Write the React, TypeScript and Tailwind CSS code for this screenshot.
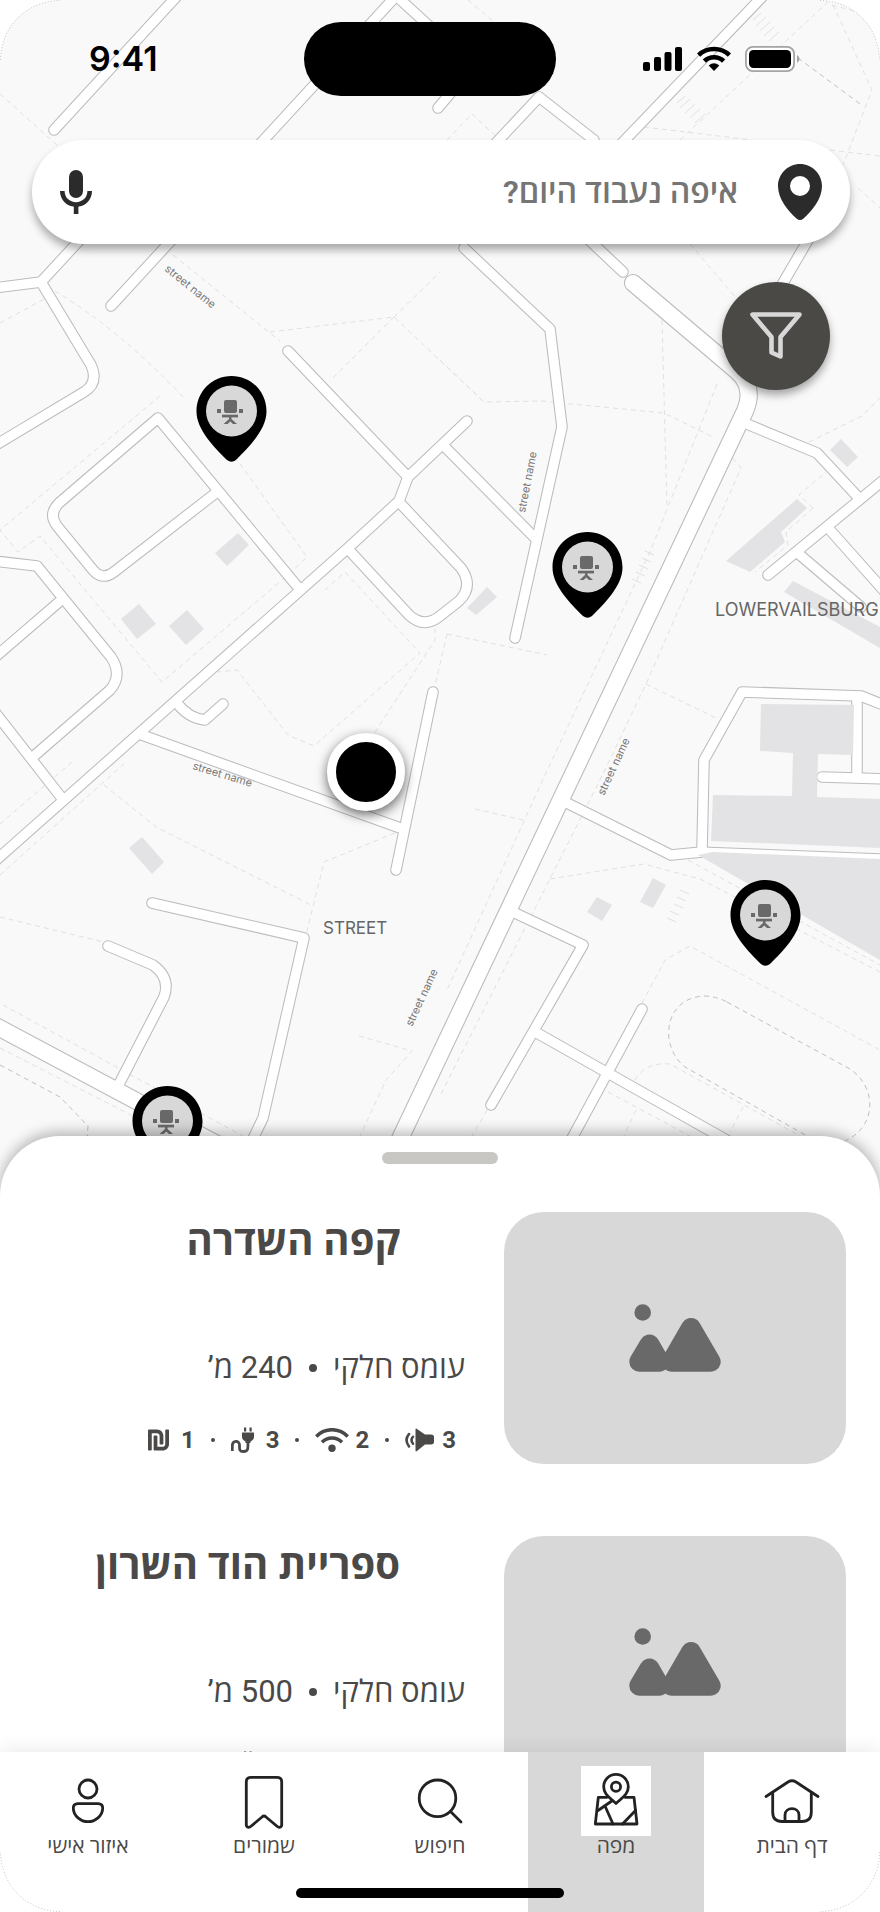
import type { ReactNode } from "react";
import { FaShekelSign } from "react-icons/fa";

const HEBREW = "font-[Roboto,'Open_Sans','Noto_Sans',sans-serif]";

const narrowRoads = [
  "M178,-5 L54,130",
  "M396,-4 L111,306",
  "M392,-8 L440,36",
  "M438,108 L470,70",
  "M480,160 L539,97 L594,140",
  "M764,-5 L600,166",
  "M570,222 L623,272",
  "M815,228 L783,283 L752,335 L750,380",
  "M464,248 L550,329 L562,427 L515,638",
  "M467,421 L408,477 L399,501 L348,548 L-6,862",
  "M288,351 L408,477",
  "M444,446 L535,538",
  "M399,502 L461,568 Q474,586 459,601 L440,616 Q424,629 409,615 L348,549",
  "M297,586 L158,418 L59,503 Q48,514 57,526 L93,570 Q102,581 114,572 L217,492",
  "M-6,561 L37,566 L111,657 Q123,675 110,690 L34,756",
  "M59,602 L-6,658",
  "M-6,711 L61,797",
  "M177,703 Q188,718 205,720 L223,704",
  "M142,735 L403,829",
  "M433,692 L396,870",
  "M89,230 L41,282 L-6,288",
  "M41,282 L91,365 Q99,383 84,392 L-6,446",
  "M152,903 L304,938 L263,1118 L250,1145",
  "M108,946 L153,965 Q171,978 164,997 L118,1086",
  "M742,422 L817,453 L857,496",
  "M768,575 L886,478",
  "M830,530 L886,593",
  "M800,555 L861,607",
  "M567,803 L671,855 L702,852",
  "M702,851 L704,760 L742,692 L861,696 L886,706",
  "M857,698 L857,777",
  "M822,777 L886,779",
  "M515,913 L583,945 L491,1105",
  "M537,1033 L730,1142",
  "M642,1009 L570,1142",
];

const wideRoads = [
  "M633,283 L738,372 Q755,388 745,411 L390,1160",
  "M-8,1024 L230,1151",
];

const buildings = [
  "215,553 238,533 249,545 227,566",
  "121,619 139,604 156,624 137,639",
  "169,626 187,610 204,629 186,645",
  "467,608 487,587 497,597 476,615",
  "830,450 841,439 858,457 847,467",
  "726,561 797,499 807,508 781,532 785,542 750,572",
  "793,581 880,627 880,648 784,592",
  "129,848 142,837 164,862 152,874",
  "587,912 597,897 612,905 602,921",
  "640,902 653,878 666,885 653,908",
];

const campus = [
  "761,704 854,705 853,755 818,754 817,797 880,799 880,848 711,841 713,795 792,796 793,753 760,751",
  "698,855 713,852 880,859 880,960",
];

const paths = [
  "M0,94 L58,146",
  "M0,323 L46,298",
  "M55,291 Q120,330 186,400",
  "M173,255 L280,341",
  "M270,332 L394,317 L484,402 L541,401 L664,413 L715,438",
  "M394,317 L330,381",
  "M394,317 L440,272",
  "M160,396 L0,530 L18,552 L40,536 L162,682 L288,575 L307,557 L238,461",
  "M325,590 L345,572 L420,653 L314,746 L288,735 L237,670 L217,672",
  "M370,740 L435,640 L435,620",
  "M0,875 L126,762",
  "M0,824 L72,762",
  "M104,785 L156,827 L313,906",
  "M395,833 L324,862 L306,935",
  "M0,917 L108,943",
  "M3,1005 L250,1140",
  "M0,1048 L160,1130",
  "M447,634 L547,655",
  "M447,634 L434,690",
  "M717,384 L650,552 L545,775 L447,990",
  "M662,320 L667,508",
  "M733,458 L741,468 L646,684 L600,780 L440,1096",
  "M646,684 L718,719",
  "M809,442 L862,416 L880,398",
  "M813,508 L799,495 L826,472",
  "M813,508 L786,532 L788,545 L755,572",
  "M359,1036 L412,1051 L386,1080 L360,1136",
  "M475,809 L523,820",
  "M550,879 L644,864 L700,879 L880,972",
  "M688,860 L880,965",
  "M642,1003 L665,960 L690,946 L880,1050",
  "M635,1080 Q645,1062 670,1064 L800,1136",
  "M608,1092 L690,1136",
  "M743,1107 L730,1132",
  "M636,1110 L624,1136",
  "M487,1110 L472,1136",
  "M644,127 L752,140",
  "M830,150 L880,156",
  "M680,140 L830,0",
  "M833,5 L872,90 L843,165",
  "M690,244 L736,298",
  "M447,140 L472,114 L500,140",
  "M468,0 L494,22",
  "M440,360 L484,402",
  "M832,5 L858,12",
  "M858,188 L880,208",
];

const crossings = [
  "M753,20 l8,-7 M756,26 l10,-9 M760,31 l10,-9 M764,36 l10,-9 M769,41 l10,-9",
  "M677,103 l8,-7 M680,108 l10,-9 M685,113 l10,-9 M690,118 l10,-9 M695,123 l10,-9",
  "M645,551 l9,4 M642,558 l9,4 M639,565 l9,4 M636,572 l9,4 M632,579 l9,4",
  "M680,890 l9,4 M677,897 l9,4 M674,904 l9,4 M670,911 l9,4 M667,918 l9,4",
];

const streetLabels = [
  { x: 164, y: 270, angle: 39 },
  { x: 525, y: 513, angle: -79 },
  { x: 192, y: 769, angle: 17 },
  { x: 604, y: 796, angle: -65 },
  { x: 412, y: 1027, angle: -65 },
];

function CityMap() {
  return (
    <svg
      className="absolute inset-0 h-full w-full"
      viewBox="0 0 880 1912"
      preserveAspectRatio="xMidYMin slice"
      aria-hidden="true"
    >
      <g fill="none" stroke="#e1e1e1" strokeWidth="1">
        {paths.map((d) => (
          <path key={d} d={d} strokeDasharray="5 4" />
        ))}
        {crossings.map((d) => (
          <path key={d} d={d} />
        ))}
      </g>
      <g fill="none" stroke="#c0c0c0" strokeWidth="1" strokeDasharray="5 4">
        <path d="M727,1002 L850,1069 C878,1088 877,1128 843,1142 L807,1136 L685,1067 C658,1046 664,996 706,996 Q718,997 727,1002Z" />
        <path d="M0,1065 L60,1097 L88,1126 L87,1140" />
        <path d="M798,58 L863,106" />
      </g>
      <g fill="#e3e2e4">
        {buildings.map((points) => (
          <polygon key={points} points={points} />
        ))}
      </g>
      <g fill="none" stroke="#bcbcbc" strokeLinecap="round" strokeLinejoin="round">
        {narrowRoads.map((d) => (
          <path key={d} d={d} strokeWidth="11.6" />
        ))}
        {wideRoads.map((d) => (
          <path key={d} d={d} strokeWidth="18.2" />
        ))}
        <path d="M702,851 L886,858" strokeWidth="9" />
      </g>
      <g fill="none" stroke="#ffffff" strokeLinecap="round" strokeLinejoin="round">
        {narrowRoads.map((d) => (
          <path key={d} d={d} strokeWidth="9.5" />
        ))}
        {wideRoads.map((d) => (
          <path key={d} d={d} strokeWidth="16" />
        ))}
        <path d="M702,851 L886,858" strokeWidth="7" />
      </g>
      <g fill="#e3e2e4">
        {campus.map((points) => (
          <polygon key={points} points={points} />
        ))}
      </g>
      <g className="font-[Inter,sans-serif] text-[11px]" fill="#7a7a7a">
        {streetLabels.map(({ x, y, angle }) => (
          <text key={`${x}-${y}`} x={x} y={y} transform={`rotate(${angle} ${x} ${y})`}>
            street name
          </text>
        ))}
      </g>
      <g className="font-[Inter,sans-serif]" fill="#666666">
        <text className="text-[17px]" x="323" y="934">STREET</text>
        <text className="text-[18px]" x="715" y="616">LOWERVAILSBURG</text>
      </g>
    </svg>
  );
}

function PlacePin({ place }: { place: string }) {
  return (
    <button type="button" aria-label="מקום עבודה" className={`absolute ${place}`}>
      <svg className="block h-[86px] w-[71px]" viewBox="0 0 71 86">
        <path d="M35.5,0 C55,0 70.5,15.5 70.5,35.5 C70.5,54 52,72 40,84 Q35.5,87.5 31,84 C19,72 0.5,54 0.5,35.5 C0.5,15.5 16,0 35.5,0Z" fill="#000" />
        <circle cx="35.5" cy="35" r="25.5" fill="#d8d8d8" />
        <g fill="#696969">
          <rect x="28" y="24" width="13" height="13" rx="2" />
          <rect x="21" y="33" width="4" height="4" />
          <rect x="43" y="33" width="4" height="4" />
          <rect x="26" y="38.7" width="16" height="2.7" />
          <path d="M33,41 h2.5 v2 l5.5,5 h-4 l-2.7,-2.6 l-2.7,2.6 h-4 l5.4,-5z" />
        </g>
      </svg>
    </button>
  );
}

function StatusBar() {
  return (
    <header className="relative grid grid-cols-[1fr_252px_1fr] items-center pt-[22px] pr-5">
      <time className="pl-[89px] font-[Inter,sans-serif] text-[34px] leading-10 font-semibold text-black">9:41</time>
      <div className="h-[74px] rounded-full bg-black" />
      <div className="flex items-center justify-end gap-[14px] pr-[60px]">
        <svg className="h-[26px] w-10" viewBox="0 0 40 26" aria-hidden="true">
          <rect x="0" y="16" width="7" height="9" rx="2" />
          <rect x="11" y="11" width="7" height="14" rx="2" />
          <rect x="21.5" y="6" width="7" height="19" rx="2" />
          <rect x="32" y="1" width="7" height="24" rx="2" />
        </svg>
        <svg className="h-[26px] w-[34px]" viewBox="0 0 34 26" aria-hidden="true">
          <g fill="none" stroke="#000" strokeWidth="4.6">
            <path d="M1.6,9.2 C10,1 24,1 32.4,9.2" />
            <path d="M7.4,15.2 C12.5,10 21.5,10 26.6,15.2" />
          </g>
          <path d="M11.7,19.5 Q17,15 22.3,19.5 L17,25Z" />
        </svg>
        <svg className="h-[26px] w-[55px]" viewBox="0 0 55 26" aria-hidden="true">
          <rect x="0.9" y="0.9" width="48.2" height="24.2" rx="7" fill="#fff" stroke="#a4a4a4" strokeWidth="1.8" />
          <rect x="4" y="4" width="42" height="18" rx="4.5" />
          <path d="M52,9 Q54.5,10.5 54.5,13 T52,17Z" fill="#a4a4a4" />
        </svg>
      </div>
    </header>
  );
}

function SearchBar() {
  return (
    <form
      dir="rtl"
      className="relative mt-[44px] mr-[30px] ml-8 flex h-[104px] items-center rounded-full bg-white px-7 shadow-[0_6px_8px_rgba(0,0,0,0.32)]"
      onSubmit={(event) => event.preventDefault()}
    >
      <svg className="h-14 w-11 shrink-0" viewBox="0 0 44 56" aria-hidden="true">
        <path
          fill="#2b2b2b"
          fillRule="evenodd"
          d="M22,0 C34,0 44,10 44,22 C44,35 34,47 25.5,54.5 Q22,57.5 18.5,54.5 C10,47 0,35 0,22 C0,10 10,0 22,0Z M22,12 A10,10 0 1 0 22,32 A10,10 0 1 0 22,12Z"
        />
      </svg>
      <label htmlFor="place-search" className="sr-only">חיפוש מקום</label>
      <input
        id="place-search"
        type="text"
        placeholder="איפה נעבוד היום?"
        className={`h-full min-w-0 flex-1 bg-transparent px-10 text-[32px] leading-[56px] font-semibold outline-none placeholder:text-[#757575] ${HEBREW}`}
      />
      <button type="button" aria-label="חיפוש קולי" className="shrink-0">
        <svg className="block h-11 w-8" viewBox="0 0 32 44">
          <rect x="9" y="0" width="14" height="28" rx="7" fill="#2b2b2b" />
          <path d="M2.3,21 C2.3,29 8.5,34.5 16,34.5 C23.5,34.5 29.7,29 29.7,21" fill="none" stroke="#2b2b2b" strokeWidth="4.6" />
          <rect x="13.8" y="34" width="4.6" height="10" fill="#2b2b2b" />
        </svg>
      </button>
    </form>
  );
}

function Rating({ value, gap, children }: { value: number; gap: string; children: ReactNode }) {
  return (
    <li className={`flex items-center ${gap}`}>
      <span>{value}</span>
      {children}
    </li>
  );
}

function Separator() {
  return <li aria-hidden="true" className="size-1 rounded-full bg-[#4a4947]" />;
}

function PlaceCard({ name, distance }: { name: string; distance: string }) {
  return (
    <article dir="rtl" className={`flex text-[#4a4947] ${HEBREW}`}>
      <div className="flex h-[252px] w-[342px] shrink-0 items-center justify-center rounded-[40px] bg-[#d8d8d8]">
        <svg className="h-[68px] w-[92px]" viewBox="0 0 92 68" fill="#696969" stroke="#696969" aria-hidden="true">
          <circle cx="13.7" cy="8.5" r="8.3" stroke="none" />
          <path d="M20.5,40.5 L30.5,57.7 H10.3Z" strokeWidth="20" strokeLinejoin="round" />
          <path d="M62,24 L81.7,57.7 H42.5Z" strokeWidth="20" strokeLinejoin="round" />
        </svg>
      </div>
      <div className="min-w-0 flex-1 pt-1">
        <h2 className="pr-[104px] text-[40px] leading-[52px] font-bold">{name}</h2>
        <div className="mt-[80px] flex items-center gap-4 pr-[39px] text-[31px] leading-10">
          <span>עומס חלקי</span>
          <span className="size-2 rounded-full bg-[#4a4947]" />
          <span>{distance} מ’</span>
        </div>
        <ul className="mt-[36px] flex h-8 items-center gap-4 pr-[48px] text-2xl leading-8 font-bold">
          <Rating value={3} gap="gap-2">
            <svg className="h-6 w-[29px]" viewBox="0 0 29 26" preserveAspectRatio="none" aria-label="רעש">
              <path d="M10.5,1.5 Q10.5,0 12,1 L20,7 H26 Q29,7 29,10 V15 Q29,18 26,18 H20 L12,25 Q10.5,26 10.5,24.5Z" fill="#4a4947" />
              <g fill="none" stroke="#4a4947" strokeWidth="2.6" strokeLinecap="round">
                <path d="M8,9.5 Q5,13 8,17" />
                <path d="M4,6.5 Q-1,13 4,20" />
              </g>
            </svg>
          </Rating>
          <Separator />
          <Rating value={2} gap="gap-1.5">
            <svg className="h-6 w-[34px]" viewBox="0 0 34 24" aria-label="אינטרנט">
              <g fill="none" stroke="#4a4947" strokeWidth="3.6">
                <path d="M1.2,8.5 C10,-0.5 24,-0.5 32.8,8.5" />
                <path d="M7,14.2 C12.5,8.5 21.5,8.5 27,14.2" />
              </g>
              <circle cx="17" cy="20.3" r="3.7" fill="#4a4947" />
            </svg>
          </Rating>
          <Separator />
          <Rating value={3} gap="gap-3">
            <svg className="h-[26px] w-[23px]" viewBox="0 0 23 26" aria-label="שקעים">
              <path d="M13,0.5 h2.2 v4 h-2.2z M18.5,0.5 h2.2 v4 h-2.2z" fill="#4a4947" />
              <path d="M11,5.5 H23 V10 Q23,12.5 19.5,14.5 V16 H14.5 V14.5 Q11,12.5 11,10Z" fill="#4a4947" />
              <path d="M1.3,24 V19 C1.3,13 8.5,13 8.5,18 C8.5,22 8,24.5 12.5,24.5 C17,24.5 17,22 17,16" fill="none" stroke="#4a4947" strokeWidth="2.8" />
            </svg>
          </Rating>
          <Separator />
          <Rating value={1} gap="gap-3">
            <FaShekelSign className="h-6 w-[21px]" aria-label="מחיר" />
          </Rating>
        </ul>
      </div>
    </article>
  );
}

const tabs: { label: string; active?: boolean; icon: ReactNode }[] = [
  {
    label: "דף הבית",
    icon: (
      <>
        <path d="M9,30.5 L31,16 Q35,13.5 39,16 L61,30.5" />
        <path d="M15.7,27 V46 Q15.7,55.5 25,55.5 H45 Q54.3,55.5 54.3,46 V27" />
        <path d="M28,55 V49 C28,40.5 42,40.5 42,49 V55" />
      </>
    ),
  },
  {
    label: "מפה",
    active: true,
    icon: (
      <>
        <path d="M26,31.3 H17.3 L14.3,58 H56 L53,31.3 H44" />
        <path d="M35,37.5 C28,31 22.7,28 22.7,20.7 A12.3,12.3 0 0 1 47.3,20.7 C47.3,28 42,31 35,37.5Z" />
        <circle cx="35" cy="20.7" r="4.6" />
        <path d="M17,44.5 L31.5,34.5 M24,40 L32,58 M41.5,58 L54.5,44.5" />
      </>
    ),
  },
  {
    label: "חיפוש",
    icon: (
      <>
        <circle cx="32.5" cy="32.3" r="18.3" />
        <path d="M45.5,45.5 L56,56" />
      </>
    ),
  },
  {
    label: "שמורים",
    icon: (
      <path d="M22,11.3 H48 Q52.7,11.3 52.7,16 V58.5 C52.7,61.5 50,62 48,60.3 L37,51 Q35,49 33,51 L22,60.3 C20,62 17.3,61.5 17.3,58.5 V16 Q17.3,11.3 22,11.3Z" />
    ),
  },
  {
    label: "איזור אישי",
    icon: (
      <>
        <circle cx="35" cy="23" r="9" />
        <path d="M25,37.7 H45 Q49.7,38 49.7,42 C49.7,50 42,55.7 35,55.7 C28,55.7 20.3,50 20.3,42 Q20.3,38 25,37.7Z" />
      </>
    ),
  },
];

function TabBar() {
  return (
    <nav
      dir="rtl"
      className={`relative z-10 flex h-[160px] shrink-0 bg-white shadow-[0_-4px_16px_rgba(0,0,0,0.07)] ${HEBREW}`}
    >
      {tabs.map(({ label, active, icon }) => (
        <a
          key={label}
          href="#"
          aria-current={active ? "page" : undefined}
          className={`flex flex-1 flex-col items-center pt-[14px] text-[21px] leading-5 text-[#4a4947] ${active ? "bg-[#d8d8d8]" : ""}`}
        >
          <svg
            className={`size-[70px] ${active ? "bg-white" : ""}`}
            viewBox="0 0 70 70"
            fill="none"
            stroke="#222222"
            strokeWidth="2.8"
            strokeLinecap="round"
            strokeLinejoin="round"
            aria-hidden="true"
          >
            {icon}
          </svg>
          {label}
        </a>
      ))}
      <div className="pointer-events-none absolute inset-x-0 bottom-[14px] flex justify-center pr-5">
        <div className="h-2.5 w-[268px] rounded-full bg-black" />
      </div>
    </nav>
  );
}

function CornerEdge({ place }: { place: string }) {
  return (
    <svg className={`pointer-events-none absolute z-20 size-[60px] ${place}`} viewBox="0 0 60 60" aria-hidden="true">
      <path d="M0.5,60 A59.5,59.5 0 0 1 60,0.5" fill="none" stroke="#b8b8b8" strokeDasharray="1 2" />
    </svg>
  );
}

export default function App() {
  return (
    <main className="relative flex h-screen flex-col overflow-hidden rounded-[60px] bg-[#f9f9f9]">
      <CityMap />
      <section className="relative min-h-0 flex-1">
        <PlacePin place="left-[196px] top-[376px]" />
        <PlacePin place="left-[552px] top-[532px]" />
        <PlacePin place="left-[730px] top-[880px]" />
        <PlacePin place="left-[132px] top-[1086px]" />
        <div className="absolute top-[733px] left-[327px] size-[78px] rounded-full border-[9px] border-white bg-black shadow-[0_4px_12px_rgba(0,0,0,0.6)]" />
        <StatusBar />
        <SearchBar />
        <div className="mt-[38px] flex justify-end pr-[50px]">
          <button
            type="button"
            aria-label="סינון"
            className="relative flex size-[108px] items-center justify-center rounded-full bg-[#4a4946] shadow-[0_5px_8px_rgba(0,0,0,0.35)]"
          >
            <svg className="h-12 w-[52px]" viewBox="0 0 52 48" fill="none" stroke="#d8d8d8" strokeWidth="4.6" strokeLinejoin="round">
              <path d="M2.5,2.5 H49.5 L30.5,25 V44.5 L21.5,40.5 V25Z" />
            </svg>
          </button>
        </div>
      </section>
      <section className="relative flex h-[616px] shrink-0 flex-col rounded-t-[60px] bg-white pt-4 shadow-[0_-4px_14px_rgba(0,0,0,0.28)]">
        <div className="h-3 w-[116px] shrink-0 self-center rounded-full bg-[#c8c7c4]" />
        <div className="mt-12 flex min-h-0 flex-1 flex-col gap-[72px] overflow-hidden pr-[34px]">
          <PlaceCard name="קפה השדרה" distance="240" />
          <PlaceCard name="ספריית הוד השרון" distance="500" />
        </div>
      </section>
      <TabBar />
      <CornerEdge place="top-0 left-0" />
      <CornerEdge place="top-0 right-0 rotate-90" />
      <CornerEdge place="right-0 bottom-0 rotate-180" />
      <CornerEdge place="bottom-0 left-0 -rotate-90" />
    </main>
  );
}
